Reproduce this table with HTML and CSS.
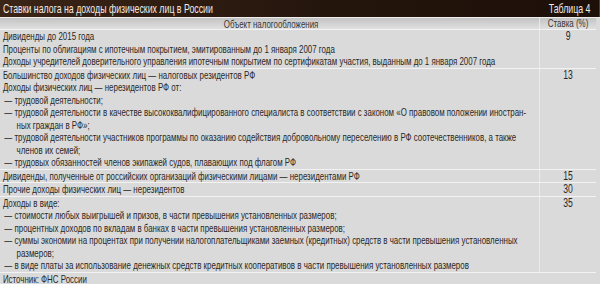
FILE: index.html
```html
<!DOCTYPE html>
<html lang="ru">
<head>
<meta charset="utf-8">
<link rel="stylesheet" href="styles.css">
</head>
<body>
<div class="frame">
<div class="page">
  <div class="title">
    <span>Ставки налога на доходы физических лиц в России</span>
    <span>Таблица 4</span>
  </div>
  <div class="row head">
    <div class="c1">Объект налогообложения</div>
    <div class="c2">Ставка (%)</div>
  </div>
  <div class="row">
    <div class="c1">
      <p>Дивиденды до 2015 года</p>
      <p>Проценты по облигациям с ипотечным покрытием, эмитированным до 1 января 2007 года</p>
      <p>Доходы учредителей доверительного управления ипотечным покрытием по сертификатам участия, выданным до 1 января 2007 года</p>
    </div>
    <div class="c2">9</div>
  </div>
  <div class="row">
    <div class="c1">
      <p>Большинство доходов физических лиц — налоговых резидентов РФ</p>
      <p>Доходы физических лиц — нерезидентов РФ от:</p>
      <p class="item">— трудовой деятельности;</p>
      <p class="item">— трудовой деятельности в качестве высококвалифицированного специалиста в соответствии с законом «О правовом положении иностран-<br>ных граждан в РФ»;</p>
      <p class="item">— трудовой деятельности участников программы по оказанию содействия добровольному переселению в РФ соотечественников, а также<br>членов их семей;</p>
      <p class="item">— трудовых обязанностей членов экипажей судов, плавающих под флагом РФ</p>
    </div>
    <div class="c2">13</div>
  </div>
  <div class="row">
    <div class="c1"><p>Дивиденды, полученные от российских организаций физическими лицами — нерезидентами РФ</p></div>
    <div class="c2">15</div>
  </div>
  <div class="row">
    <div class="c1"><p>Прочие доходы физических лиц — нерезидентов</p></div>
    <div class="c2">30</div>
  </div>
  <div class="row last">
    <div class="c1">
      <p>Доходы в виде:</p>
      <p class="item">— стоимости любых выигрышей и призов, в части превышения установленных размеров;</p>
      <p class="item">— процентных доходов по вкладам в банках в части превышения установленных размеров;</p>
      <p class="item">— суммы экономии на процентах при получении налогоплательщиками заемных (кредитных) средств в части превышения установленных<br>размеров;</p>
      <p class="item">— в виде платы за использование денежных средств кредитных кооперативов в части превышения установленных размеров</p>
    </div>
    <div class="c2">35</div>
  </div>
  <div class="source">Источник: ФНС России</div>
</div>
</div>
</body>
</html>
```

FILE: styles.css
```css
html, body {
  margin: 0;
  padding: 0;
  background: #dadada;
}
.frame {
  width: 600px;
  height: 284px;
  overflow: hidden;
  background: #dadada;
}
/* the source typeface is a condensed grotesque: emulate it by compressing horizontally */
.page {
  width: 833px;
  transform: scaleX(0.72);
  transform-origin: 0 0;
  font-family: "Liberation Sans", Arial, sans-serif;
  font-size: 11px;
  color: #2a2826;
}
.title {
  height: 17px;
  display: flex;
  justify-content: space-between;
  align-items: center;
  padding: 0 13px 0 4px;
  background: linear-gradient(to right, #3b2517, #24150c 55%, #1d1008);
  color: #f1ebe4;
  font-size: 12.2px;
  border-bottom: 1px solid #eeeeee;
}
.row {
  display: grid;
  grid-template-columns: 750px 1fr;
  border-top: 1px solid #f2f2f2;
  margin-right: 5px;
}
.row.head {
  border-top: 0;
  height: 11px;
  line-height: 11px;
  background: linear-gradient(to bottom, #c3c3c3, #e0e0e0);
  color: #3a3836;
}
.head .c1, .head .c2 { text-align: center; }
.c1 {
  border-right: 1px solid #f2f2f2;
  padding: 0 0 0 4px;
  line-height: 12.5px;
}
.c2 {
  text-align: center;
  line-height: 12.5px;
  font-size: 12px;
}
.head .c2 { font-size: 11px; line-height: 11px; }
p { margin: 0; }
.item {
  padding-left: 19px;
  text-indent: -17px;
}
.row.last { border-bottom: 1px solid #f2f2f2; }
.source {
  padding-left: 4px;
  line-height: 12px;
}
```
